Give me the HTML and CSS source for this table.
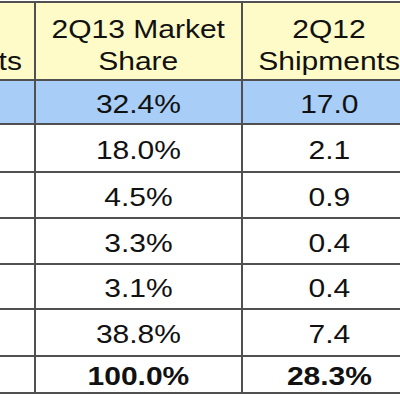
FILE: index.html
```html
<!DOCTYPE html>
<html lang="en">
<head>
    <meta charset="UTF-8">
    <meta name="viewport" content="width=device-width, initial-scale=1.0">
    <title>Tablet Shipments</title>

    <link rel="stylesheet" href="styles.css">

</head>
<body>
    <section class="sheet">
        <div class="cell head"><span>2Q13<br>Shipments</span></div>
        <div class="cell head"><span>2Q13 Market<br>Share</span></div>
        <div class="cell head"><span>2Q12<br>Shipments</span></div>

        <div class="cell mark"></div>
        <div class="cell mark"><span>32.4%</span></div>
        <div class="cell mark"><span>17.0</span></div>

        <div class="cell"></div>
        <div class="cell"><span>18.0%</span></div>
        <div class="cell"><span>2.1</span></div>

        <div class="cell"></div>
        <div class="cell"><span>4.5%</span></div>
        <div class="cell"><span>0.9</span></div>

        <div class="cell"></div>
        <div class="cell"><span>3.3%</span></div>
        <div class="cell"><span>0.4</span></div>

        <div class="cell"></div>
        <div class="cell"><span>3.1%</span></div>
        <div class="cell"><span>0.4</span></div>

        <div class="cell"></div>
        <div class="cell"><span>38.8%</span></div>
        <div class="cell"><span>7.4</span></div>

        <div class="cell total"></div>
        <div class="cell total"><span>100.0%</span></div>
        <div class="cell total"><span>28.3%</span></div>
    </section>
</body>
</html>
```

FILE: styles.css
```css
html{
    box-sizing: border-box;
    font-family: "Liberation Sans", Arial, sans-serif;
    font-size: 16px;
    overflow: hidden;
}

*, *::after, *::before{
    box-sizing: inherit;
}

body{
    margin: 0;
    padding-top: 1px;
    background-color: #fff;
    overflow: hidden;
}

.sheet{
    display: grid;
    grid-template-columns: 165px 205px 172px;
    grid-template-rows: 76px 42px 46px 44px 44px 43px 45px 35px;
    gap: 2px;
    padding: 2px;
    width: 550px;
    margin-left: -133px;
    background-color: #505050;
}

.cell{
    display: flex;
    align-items: center;
    justify-content: center;
    padding-top: 3px;
    background-color: #fff;
    color: #111;
    font-size: 25px;
    line-height: 28px;
    text-align: center;
}

.cell span{
    display: inline-block;
    transform: scaleX(1.2);
}

.head{
    align-items: flex-start;
    padding-top: 10px;
    line-height: 32px;
    background-color: #fefbc8;
}

.mark{
    background-color: #a8cdf6;
}

.total{
    font-weight: bold;
}
```
